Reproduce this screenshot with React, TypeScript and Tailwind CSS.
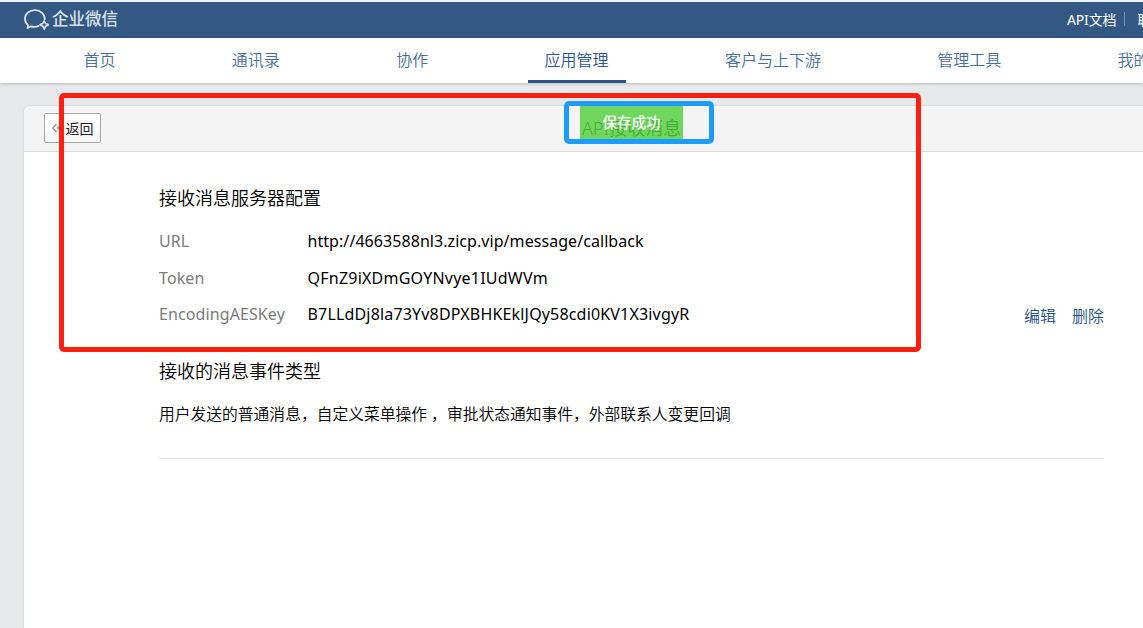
import clsx from "clsx";

interface NavItem {
  label: string;
  active?: boolean;
}

interface ConfigRow {
  name: string;
  value: string;
  spacing: string;
}

const navItems: NavItem[] = [
  { label: "首页" },
  { label: "通讯录" },
  { label: "协作" },
  { label: "应用管理", active: true },
  { label: "客户与上下游" },
  { label: "管理工具" },
  { label: "我的" },
];

const configRows: ConfigRow[] = [
  {
    name: "URL",
    value: "http://4663588nl3.zicp.vip/message/callback",
    spacing: "tracking-[0.06px]",
  },
  {
    name: "Token",
    value: "QFnZ9iXDmGOYNvye1IUdWVm",
    spacing: "tracking-[0.23px]",
  },
  {
    name: "EncodingAESKey",
    value: "B7LLdDj8la73Yv8DPXBHKEklJQy58cdi0KV1X3ivgyR",
    spacing: "tracking-[0.17px]",
  },
];

const Logo: React.FC = () => {
  return (
    <div className="flex items-center text-[#dbe3ee]">
      <svg width="28" height="22" viewBox="0 0 28 22" fill="none" stroke="currentColor">
        <path
          d="M20.7 10.2C20.9 5.2 16.6 1.2 11 1.2C5.2 1.2 1 4.9 1 9.8C1 12.4 2.1 14.6 4.1 16.1L3.6 19L7.1 17.4C9.5 18.1 12.2 18 14.6 17"
          strokeWidth="1.8"
          strokeLinecap="round"
          strokeLinejoin="round"
        />
        <path
          d="M20.2 11.9L21.6 14.4L24.4 15.8L21.6 17.2L20.2 20L18.8 17.2L16 15.8L18.8 14.4Z"
          strokeWidth="1.7"
          strokeLinejoin="round"
        />
      </svg>
      <span className="pb-0.5 text-[16.5px] leading-5 font-medium">企业微信</span>
    </div>
  );
};

const App: React.FC = () => {
  return (
    <div className="relative flex h-[628px] w-[1143px] flex-col overflow-hidden bg-[#e8e9eb] font-['Noto_Sans','Noto_Sans_CJK_SC',sans-serif] text-black">
      <header className="flex h-[38px] shrink-0 items-center justify-between border-t-2 border-[#e9eff4] bg-[#335883] pl-6">
        <Logo />
        <div className="flex w-[76px] shrink-0 items-center overflow-hidden pb-0.5 text-[14px] whitespace-nowrap text-white">
          <span className="w-[50px] tracking-[-0.15px]">API文档</span>
          <span className="ml-[8px] h-[14px] w-px shrink-0 bg-[#7d95b1]" />
          <span className="ml-3">联</span>
        </div>
      </header>

      <nav className="relative flex h-[45px] shrink-0 gap-[82.33px] bg-white pl-[66.5px] text-base font-[350] whitespace-nowrap text-[#4a6f9c] shadow-[0_1px_3px_rgba(0,0,0,0.2)]">
        {navItems.map((item) => (
          <a
            key={item.label}
            className={clsx(
              "flex h-full shrink-0 items-center border-b-3 px-[17px] pt-0.5",
              item.active
                ? "border-[#2c5689] text-[#2c5689]"
                : "border-transparent",
            )}
          >
            {item.label}
          </a>
        ))}
      </nav>

      <main className="mt-[23px] ml-6 flex flex-1 flex-col rounded-tl-md bg-white shadow-[0_0_2px_rgba(0,0,0,0.18)]">
        <div className="flex h-[46px] shrink-0 items-center rounded-tl-md border-b border-[#dcdddf] bg-[#f4f4f4] pb-0.5 pl-5">
          <button
            type="button"
            className="flex h-[30px] w-[57px] items-center rounded-xs border border-[#a6a6a6] bg-linear-to-b from-white to-[#f6f6f6] pl-[7px] text-[14px] text-[#222]"
          >
            <svg width="10" height="10" viewBox="0 0 10 10" fill="none" stroke="#999" strokeWidth="1.4">
              <path d="M4.5 1L1 5L4.5 9M9 1L5.5 5L9 9" />
            </svg>
            <span className="ml-[3.5px] pt-px">返回</span>
          </button>
          <h1 className="ml-[481px] text-[18px] leading-6 font-[350] whitespace-nowrap text-[#222]">
            API接收消息
          </h1>
        </div>

        <div className="mr-[39px] ml-[135px] border-b border-[#e4e4e4] pt-8 pb-8">
          <h2 className="text-[18px] leading-7 font-[350]">接收消息服务器配置</h2>
          <div className="flex items-end justify-between pt-[11px]">
            <dl className="flex flex-col text-base">
              {configRows.map((row) => (
                <div key={row.name} className="flex h-[36.5px] items-center">
                  <dt className="w-[148.5px] tracking-[0.1px] text-[#7b7b7b]">{row.name}</dt>
                  <dd className={row.spacing}>{row.value}</dd>
                </div>
              ))}
            </dl>
            <div className="flex h-[29px] gap-4 text-base font-[350] text-[#1f5285]">
              <a>编辑</a>
              <a>删除</a>
            </div>
          </div>
          <h2 className="mt-[24px] text-[18px] leading-7 font-[350]">接收的消息事件类型</h2>
          <p className="mt-[17px] text-[15.78px] leading-6 font-[350] whitespace-nowrap">
            用户发送的普通消息，自定义菜单操作 ，审批状态通知事件，外部联系人变更回调
          </p>
        </div>
      </main>

      <div className="absolute top-[106px] left-[580px] flex h-[33px] w-[103px] items-center justify-center bg-[#4fcf38]/80 text-[14.5px] font-medium text-white">
        保存成功
      </div>
      <div className="absolute top-[101px] left-[564px] h-[43px] w-[150px] rounded-[5px] border-5 border-[#1b9cff]" />
      <div className="absolute top-[93px] left-[59px] h-[259px] w-[862px] rounded-[5px] border-5 border-[#ff1e10]" />
    </div>
  );
};

export default App;
